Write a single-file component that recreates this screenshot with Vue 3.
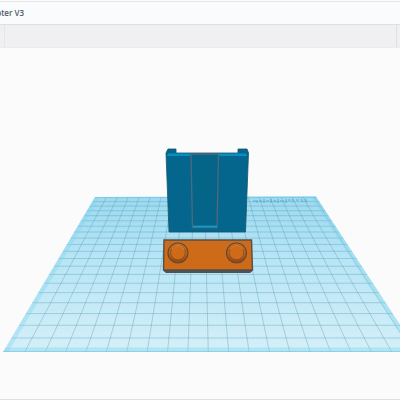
<script setup>
const vp = { x: 200.5, y: 19 }
const bottom = 352
const at = (x, y) => vp.x + ((x - vp.x) * (y - vp.y)) / (bottom - vp.y)
const rowY = (k) => vp.y + 1 / (0.003135 + 0.00013 * k)

const ray = (x) => `M${x} ${bottom}L${at(x, 197).toFixed(2)} 197`
const row = (y) => `M${at(3, y).toFixed(2)} ${y.toFixed(2)}L${at(418, y).toFixed(2)} ${y.toFixed(2)}`

const major = []
const minor = []
for (let i = 0; i < 20; i++) major.push(ray(24.7 + i * 20.4))
for (let k = 0; k < 19; k++) major.push(row(rowY(k)))
for (let i = 0; i < 202; i++) minor.push(ray(+(6 + i * 2.04).toFixed(2)))
for (let i = -10; i < 190; i++) minor.push(row(rowY(i / 10)))
const majorPath = major.join('')
const minorPath = minor.join('')
</script>

<template>
  <div class="editor">
    <header class="titlebar"><h1 class="title">pter V3</h1></header>
    <div class="toolbar"><div class="tools"></div></div>
    <main class="stage">
      <svg class="scene" viewBox="0 48 400 351" role="img" aria-label="3D model on a workplane">
        <defs>
          <linearGradient id="plane" x1="0" y1="0" x2="0" y2="1">
            <stop offset="0" stop-color="#ade3f7" />
            <stop offset=".4" stop-color="#c5ecf9" />
            <stop offset="1" stop-color="#def4fb" />
          </linearGradient>
          <linearGradient id="knob" x1="0" y1="0" x2="0" y2="1">
            <stop offset="0" stop-color="#cf7427" />
            <stop offset=".5" stop-color="#c16116" />
            <stop offset="1" stop-color="#8c4516" />
          </linearGradient>
          <clipPath id="planeClip"><path d="M95 197L316 196.500L418 352H3Z" /></clipPath>
        </defs>
        <path d="M95 197L316 196.500L418 352H3Z" fill="url(#plane)" />
        <g clip-path="url(#planeClip)" fill="none">
          <path :d="minorPath" stroke="#64bddb" stroke-width=".35" opacity=".2" />
          <path :d="majorPath" stroke="#5599ad" stroke-width=".6" opacity=".62" />
          <path d="M95 197L3 352M316 197L418 352" stroke="#80d2eb" stroke-width="9" opacity=".36" />
          <path d="M3 350H418" stroke="#80d2eb" stroke-width="5" opacity=".4" />
          <path d="M3 351.500H418" stroke="#74c4dc" stroke-width="1" opacity=".6" />
          <path d="M95 197H316" stroke="#69c5e4" stroke-width="2" opacity=".7" />
        </g>
        <path d="M253 201h3m1-1v3m2-2h3m2-2v4m2-2h3m2-2v4m3-3l2 2m2-3v4m2-2h4m2-2v4m2-3h3m2-1v3m3-2h3m2-1l2 3m2-3l2 3" stroke="#4c9fbd" stroke-width="1.200" fill="none" opacity=".7" />

        <path d="M166 153L168 149H176V153H238V149H247L248.500 153L245.500 232H169Z" fill="#04668c" stroke="#17546e" stroke-width=".8" />
        <path d="M168 153.500H191V156H167ZM219 153.500H246L247 156H219Z" fill="#078fc1" />
        <path d="M191 154H218.500L217 227.500H192.500Z" fill="#046589" stroke="#50687c" stroke-width="1.300" />
        <path d="M193 226.500H217" stroke="#109ccc" stroke-width="1.800" />

        <path d="M164 269H252V271.500L250 273H166L163.500 271Z" fill="#4d5357" />
        <path d="M164 240H251.500L252.500 270H163.500Z" fill="#cd6b18" stroke="#554e49" stroke-width="1.400" />
        <g v-for="cx in [178, 236.500]" :key="cx">
          <circle :cx="cx" cy="253" r="10" fill="url(#knob)" stroke="#61483a" stroke-width="1.200" />
          <circle :cx="cx" cy="252.500" r="7.300" fill="#cf6b17" stroke="#854d24" stroke-width=".8" />
          <path :d="`M${cx - 6} 249A7 7 0 0 1 ${cx + 6} 249`" fill="none" stroke="#dc8540" stroke-width="1" />
        </g>
      </svg>
    </main>
  </div>
</template>

<style>
body { background: #fbfbfb; }
</style>
<style scoped>
.editor {
  display: flex;
  flex-direction: column;
  min-height: 100vh;
  box-sizing: border-box;
  overflow: hidden;
  border-bottom: 1px solid #dedfe1;
  background: #fbfbfb;
  font-family: "Open Sans", sans-serif;
}
.titlebar {
  display: flex;
  align-items: center;
  height: 22px;
  margin-top: 1px;
  border-top: 1px solid #e6e7e9;
  border-bottom: 1px solid #dedfe2;
  background: #fafbfd;
}
.title {
  display: flex;
  justify-content: flex-end;
  width: 24px;
  margin: 0;
  overflow: hidden;
  color: #515963;
  font-size: 8px;
  font-weight: 600;
  line-height: 12px;
  white-space: nowrap;
}
.toolbar {
  height: 22px;
  padding: 0 3px 0 4px;
  border-bottom: 1px solid #ececef;
  background: #f0f0f3;
}
.tools {
  height: 100%;
  border-left: 1px solid #e5e6e9;
  border-right: 1px solid #dfe0e4;
}
.stage { flex: 1; }
.scene { display: block; width: 100%; }
</style>
